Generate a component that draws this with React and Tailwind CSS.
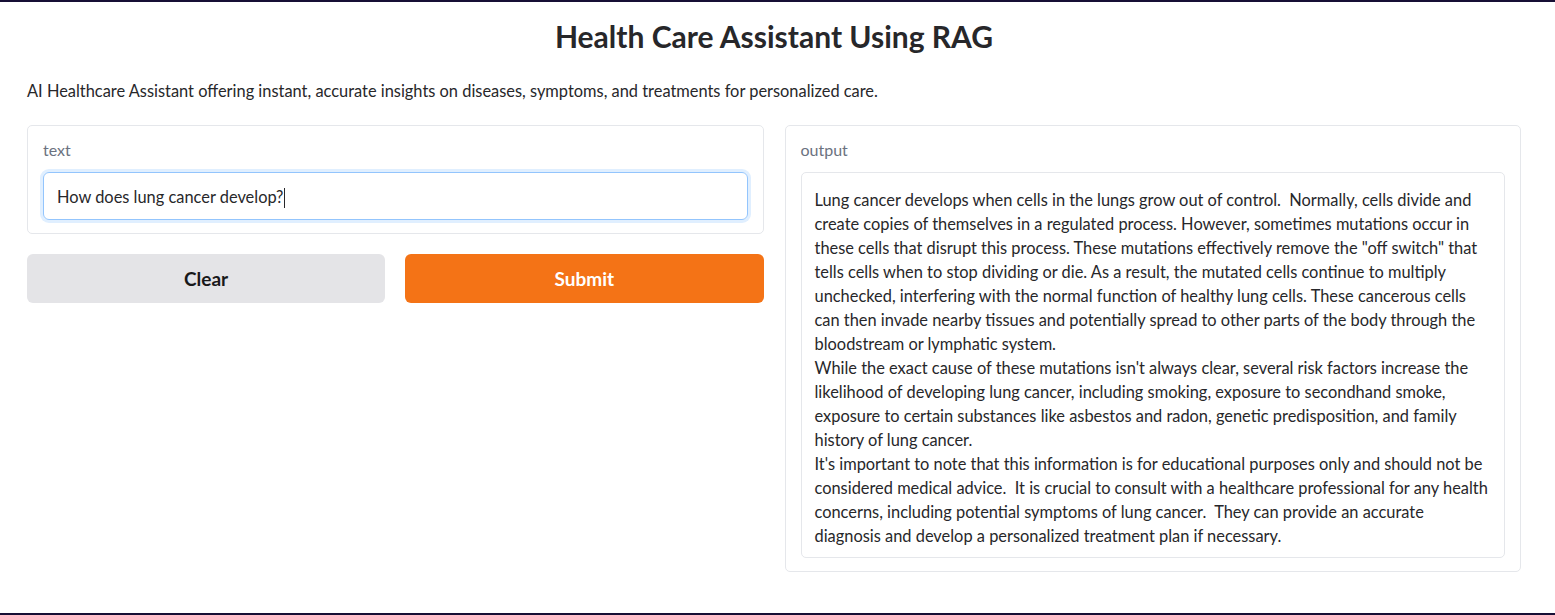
const outputLines = [
  "Lung cancer develops when cells in the lungs grow out of control.  Normally, cells divide and",
  "create copies of themselves in a regulated process. However, sometimes mutations occur in",
  'these cells that disrupt this process. These mutations effectively remove the "off switch" that',
  "tells cells when to stop dividing or die. As a result, the mutated cells continue to multiply",
  "unchecked, interfering with the normal function of healthy lung cells. These cancerous cells",
  "can then invade nearby tissues and potentially spread to other parts of the body through the",
  "bloodstream or lymphatic system.",
  "While the exact cause of these mutations isn't always clear, several risk factors increase the",
  "likelihood of developing lung cancer, including smoking, exposure to secondhand smoke,",
  "exposure to certain substances like asbestos and radon, genetic predisposition, and family",
  "history of lung cancer.",
  "It's important to note that this information is for educational purposes only and should not be",
  "considered medical advice.  It is crucial to consult with a healthcare professional for any health",
  "concerns, including potential symptoms of lung cancer.  They can provide an accurate",
  "diagnosis and develop a personalized treatment plan if necessary.",
];

export default function App() {
  return (
    <div
      className="h-[615px] w-full bg-white flex flex-col text-[#27272a]"
      style={{ fontFamily: "Lato, 'Open Sans', sans-serif" }}
    >
      <div className="h-[2px] bg-[#170f35]" />
      <main className="flex-1 pl-[27px] pr-[34px]">
        {/* Header */}
        <h1 className="mt-[16px] text-center text-[30px] leading-[36px] font-bold text-[#27272a]">
          Health Care Assistant Using RAG
        </h1>
        <p className="mt-[25px] text-[16.4px] leading-[24px]">
          AI Healthcare Assistant offering instant, accurate insights on diseases, symptoms, and treatments for personalized care.
        </p>

        <div className="mt-[22px] grid grid-cols-2 gap-[21px] items-start">
          {/* Input column */}
          <div className="min-w-0 flex flex-col gap-[20px]">
            <div className="rounded-[5px] border border-[#e5e7eb] px-[15px] pt-[12px] pb-[13px]">
              <div className="text-[16px] leading-[24px] text-[#6b7280]">text</div>
              <div className="mt-[10px] h-[48px] rounded-[6px] border border-[#93c5fd] ring-[3px] ring-[#e0efff] flex items-center px-[13px] pt-[3px] text-[16.4px]">
                How does lung cancer develop?
                <span className="ml-[1px] inline-block h-[20px] w-[1px] bg-[#27272a]" />
              </div>
            </div>
            <div className="flex gap-[20px]">
              <button className="flex-1 h-[49px] rounded-[6px] bg-[#e4e4e7] pt-[2px] text-[19px] font-bold text-[#18181b]">
                Clear
              </button>
              <button className="flex-1 h-[49px] rounded-[6px] bg-[#f47316] pt-[2px] text-[19px] font-bold text-white">
                Submit
              </button>
            </div>
          </div>

          {/* Output column */}
          <div className="min-w-0 rounded-[5px] border border-[#e5e7eb] px-[15px] pt-[12px] pb-[13px]">
            <div className="text-[16px] leading-[24px] text-[#6b7280]">output</div>
            <div className="mt-[10px] rounded-[5px] border border-[#e5e7eb] px-[13px] pt-[15px] pb-[9px] text-[16.4px] leading-[24px]">
              {outputLines.map((line, i) => (
                <div key={i} className="whitespace-pre">
                  {line}
                </div>
              ))}
            </div>
          </div>
        </div>
      </main>
      <div className="h-[2px] bg-[#170f35]" />
    </div>
  );
}
